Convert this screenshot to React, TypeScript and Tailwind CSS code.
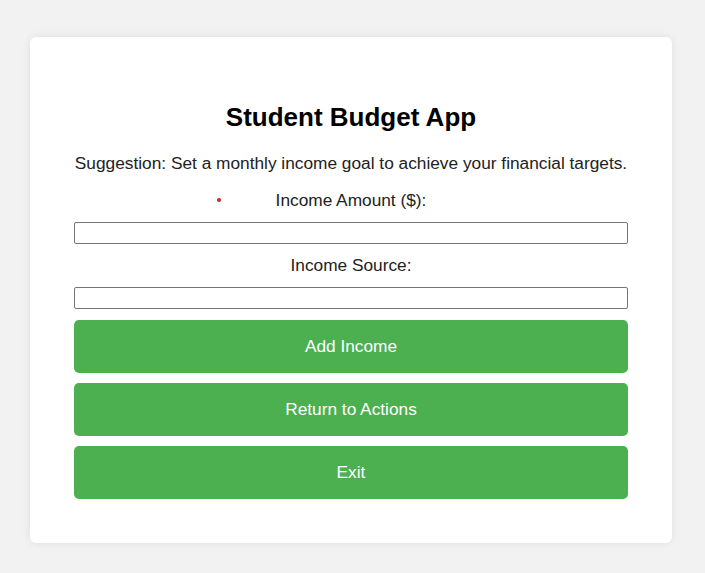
export default function App() {
  const buttons = ["Add Income", "Return to Actions", "Exit"];
  return (
    <div className="min-h-screen bg-[#f2f2f2] pt-[37px] pb-[30px] font-['Liberation_Sans',Arial,sans-serif] text-[#222]">
      <div className="ml-[30px] w-[642px] rounded-[6px] bg-white px-[44px] pt-[65px] pb-[44px] text-center shadow-[0_0_10px_rgba(0,0,0,0.08)]">
        <h1 className="text-[26px] leading-[30px] font-bold text-black">Student Budget App</h1>
        <p className="mt-[21px] text-[17.3px] leading-[20px]">
          Suggestion: Set a monthly income goal to achieve your financial targets.
        </p>
        <div className="relative mt-[17px] text-[17.3px] leading-[20px]">
          <span className="absolute left-[143px] top-[8px] h-[4px] w-[4px] rounded-full bg-[#c62828]" />
          <label>Income Amount ($):</label>
        </div>
        <input
          type="number"
          className="mt-[12px] block h-[22px] w-full rounded-[2px] border border-[#767676] bg-white"
        />
        <label className="mt-[11px] block text-[17.3px] leading-[20px]">Income Source:</label>
        <input
          type="text"
          className="mt-[12px] block h-[22px] w-full rounded-[2px] border border-[#767676] bg-white"
        />
        <div className="mt-[11px] flex flex-col gap-[10px]">
          {buttons.map((b) => (
            <button
              key={b}
              className="h-[53px] w-full rounded-[5px] bg-[#4caf50] text-[17.3px] text-white"
            >
              {b}
            </button>
          ))}
        </div>
      </div>
    </div>
  );
}
